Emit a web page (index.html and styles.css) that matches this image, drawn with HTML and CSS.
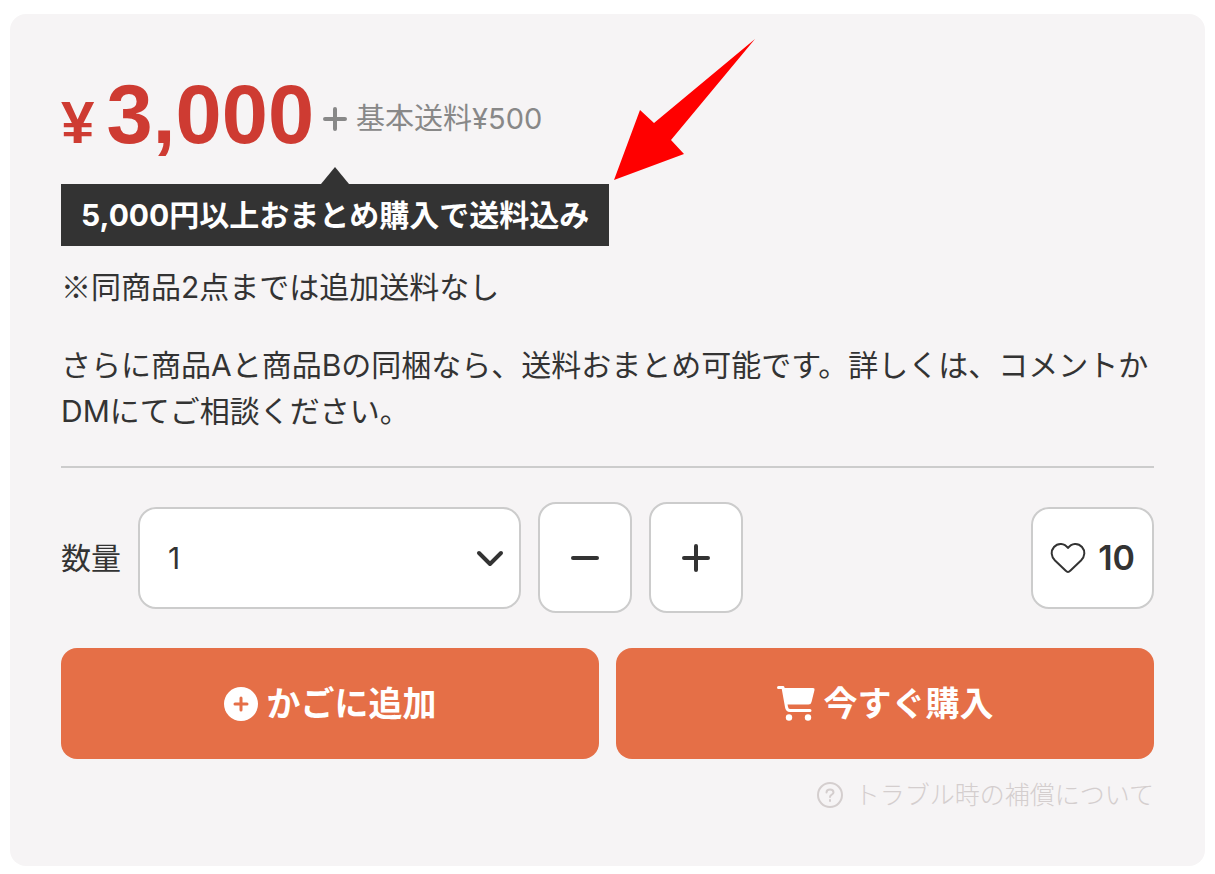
FILE: index.html
```
<!DOCTYPE html>
<html lang="ja">
<head>
<meta charset="UTF-8">
<meta name="viewport" content="width=device-width, initial-scale=1.0">
<title>商品購入</title>
<link rel="stylesheet" href="styles.css">
</head>
<body>
<main class="card">
    <div class="price-row">
        <span class="yen">¥</span>
        <span class="price">3,000</span>
        <svg class="price-plus" viewBox="0 0 24 24" aria-hidden="true"><path d="M12 2v20M2 12h20"/></svg>
        <span class="shipping">基本送料¥500</span>
    </div>
    <div class="banner">5,000円以上おまとめ購入で送料込み
        <svg class="pointer" viewBox="0 0 141 141" aria-hidden="true"><path d="M0 141L26 71L40 84L141 0L57 101L70 115Z"/></svg>
    </div>
    <p class="note"><span class="mark">※</span>同商品2点までは追加送料なし</p>
    <p class="description">さらに商品Aと商品Bの同梱なら、送料おまとめ可能です。詳しくは、コメントかDMにてご相談ください。</p>
    <hr class="divider">
    <form id="form-cart">
        <div class="quantity-row">
            <label for="quantity">数量</label>
            <div class="select-box">
                <select id="quantity" name="quantity">
                    <option>1</option>
                    <option>2</option>
                    <option>3</option>
                </select>
                <svg class="chevron" viewBox="0 0 28 18" aria-hidden="true"><path d="M3 3l11 11L25 3"/></svg>
            </div>
            <button type="button" class="step" aria-label="減らす">
                <svg viewBox="0 0 28 28" aria-hidden="true"><path d="M2 14h24"/></svg>
            </button>
            <button type="button" class="step" aria-label="増やす">
                <svg viewBox="0 0 28 28" aria-hidden="true"><path d="M2 14h24M14 2v24"/></svg>
            </button>
            <button type="button" class="like">
                <svg viewBox="0 0 36 32" aria-hidden="true"><path d="M18 30C17 30 16.500 29.500 15.500 28.500L5 18.500C1 14.500 .5 9 4 5C8 .5 14.500 1 18 6C21.500 1 28 .5 32 5C35.500 9 35 14.500 31 18.500L20.500 28.500C19.500 29.500 19 30 18 30Z"/></svg>
                10
            </button>
        </div>
        <div class="actions">
            <button type="submit">
                <svg class="icon-add" viewBox="0 0 34 34" aria-hidden="true"><circle cx="17" cy="17" r="17"/><path d="M17 11v12M11 17h12"/></svg>
                かごに追加
            </button>
            <button type="button">
                <svg class="icon-cart" viewBox="0 0 38 35" aria-hidden="true"><path class="body" d="M6 2H36Q38 2 37.500 4L34.500 16Q34 18.500 31.500 18.500H9.500Z"/><path class="frame" d="M1.500 1.500H6L9.500 21Q10 24.500 13 24.500H33"/><circle cx="12" cy="31.500" r="3.200"/><circle cx="31" cy="31.500" r="3.200"/></svg>
                今すぐ購入
            </button>
        </div>
    </form>
    <a class="help" href="#">
        <svg viewBox="0 0 26 26" aria-hidden="true"><circle cx="13" cy="13" r="12"/><path d="M9.500 10.500C9.500 8.500 11 7.500 13 7.500C15 7.500 16.500 8.500 16.500 10.500C16.500 12.500 13 12.500 13 15"/><path d="M13 18v1"/></svg>
        トラブル時の補償について
    </a>
</main>
</body>
</html>
```
FILE: styles.css
```
* {
    box-sizing: border-box;
}
body {
    font-family: Inter, "Noto Sans CJK JP", sans-serif;
    font-size: 30px;
    line-height: 46px;
    color: #333;
    background-color: #fff;
    margin: 0;
    padding: 14px 10px 8px;
}
button,
select {
    font: inherit;
    color: inherit;
    cursor: pointer;
}
svg {
    flex: none;
    fill: none;
    stroke: currentColor;
    stroke-linecap: round;
    stroke-linejoin: round;
}
.card {
    background-color: #f6f4f5;
    border-radius: 16px;
    padding: 54px 51px 48px;
}
.price-row {
    display: flex;
    align-items: baseline;
    line-height: 94px;
    color: #ce3b32;
    margin-bottom: 14px;
}
.yen,
.price {
    font-family: "Liberation Sans", Arial, sans-serif;
    font-weight: 700;
}
.yen {
    font-size: 60px;
    margin-right: 12px;
}
.price {
    font-size: 83px;
}
.price-plus {
    width: 24px;
    height: 24px;
    align-self: center;
    margin: 0 9px;
    color: #888;
    stroke-width: 4;
}
.shipping {
    align-self: center;
    font-size: 29px;
    color: #888;
}
.banner {
    position: relative;
    width: fit-content;
    padding: 8px 20px;
    background-color: #333;
    color: #fff;
    font-weight: 700;
}
.banner::before {
    content: "";
    position: absolute;
    left: 50%;
    bottom: 100%;
    transform: translateX(-50%);
    border: 14px solid transparent;
    border-top: 0;
    border-bottom: 17px solid #333;
}
.pointer {
    position: absolute;
    left: 100%;
    bottom: 100%;
    width: 141px;
    height: 141px;
    margin: 0 0 4px 5px;
    fill: #f00;
    stroke: none;
}
.note {
    margin: 16px 0 32px;
}
.mark {
    font-family: "Noto Sans CJK JP", sans-serif;
}
.description {
    margin: 0;
}
.divider {
    border: 0;
    border-top: 2px solid #ccc;
    margin: 32px 0 34px;
}
.quantity-row {
    display: flex;
    align-items: center;
    gap: 17px;
    margin-bottom: 35px;
}
.select-box {
    position: relative;
    width: 35%;
}
.select-box select {
    appearance: none;
    width: 100%;
    height: 102px;
    padding: 0 28px;
    border: 2px solid #ccc;
    border-radius: 18px;
    background-color: #fff;
}
.chevron {
    position: absolute;
    right: 17px;
    top: 43px;
    width: 28px;
    height: 18px;
    stroke-width: 4;
    pointer-events: none;
}
.step,
.like {
    display: flex;
    align-items: center;
    justify-content: center;
    border: 2px solid #ccc;
    border-radius: 18px;
    background-color: #fff;
    padding: 0;
}
.step {
    width: 94px;
    height: 111px;
}
.step svg {
    width: 28px;
    height: 28px;
    stroke-width: 4;
}
.like {
    gap: 12px;
    height: 102px;
    padding: 0 17px;
    margin-left: auto;
    font-size: 34px;
    font-weight: 600;
}
.like svg {
    width: 36px;
    height: 32px;
    stroke-width: 2;
}
.actions {
    display: grid;
    grid-template-columns: 1fr 1fr;
    gap: 17px;
}
.actions button {
    display: flex;
    align-items: center;
    justify-content: center;
    gap: 9px;
    height: 111px;
    border: 0;
    border-radius: 16px;
    background-color: #e56f47;
    color: #fff;
    font-size: 34px;
    font-weight: 700;
}
.icon-add {
    width: 34px;
    height: 34px;
    stroke-width: 3;
    stroke: #e56f47;
}
.icon-add circle {
    fill: #fff;
    stroke: none;
}
.icon-cart {
    width: 38px;
    height: 35px;
    fill: #fff;
    stroke: none;
}
.icon-cart .frame {
    fill: none;
    stroke: #fff;
    stroke-width: 3;
}
.help {
    display: flex;
    align-items: center;
    gap: 12px;
    width: fit-content;
    margin: 13px 0 0 auto;
    font-size: 25px;
    font-weight: 300;
    color: #d4cece;
    text-decoration: none;
}
.help svg {
    width: 26px;
    height: 26px;
    stroke-width: 2;
}
```
